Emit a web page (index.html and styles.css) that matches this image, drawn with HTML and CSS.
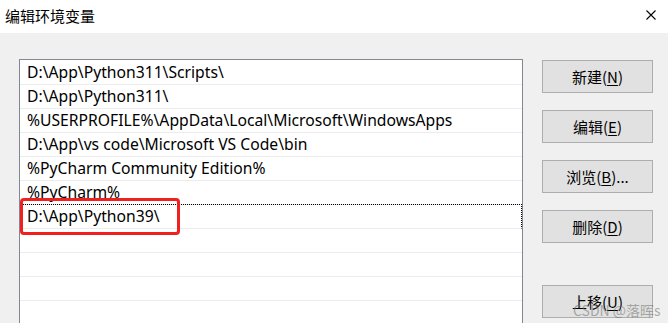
FILE: index.html
```html
<!DOCTYPE html>
<html lang="zh-CN">
<head>
    <meta charset="UTF-8">
    <title>编辑环境变量</title>
    <link rel="stylesheet" href="styles.css">
</head>
<body>

    <div class="titlebar">
        <span class="title">编辑环境变量</span>
        <svg class="close" width="10" height="10" viewBox="0 0 10 10">
            <path d="M0.5 0.5 L9.5 9.5 M9.5 0.5 L0.5 9.5" stroke="#000" stroke-width="1.1" fill="none"/>
        </svg>
    </div>

    <div class="main">
        <div class="path-list">
            <div class="row">D:\App\Python311\Scripts\</div>
            <div class="row">D:\App\Python311\</div>
            <div class="row">%USERPROFILE%\AppData\Local\Microsoft\WindowsApps</div>
            <div class="row">D:\App\vs code\Microsoft VS Code\bin</div>
            <div class="row">%PyCharm Community Edition%</div>
            <div class="row">%PyCharm%</div>
            <div class="row focus">D:\App\Python39\</div>
            <div class="row"></div>
            <div class="row"></div>
            <div class="row"></div>
            <div class="row"></div>
        </div>

        <div class="buttons">
            <button class="btn">新建(<u>N</u>)</button>
            <button class="btn">编辑(<u>E</u>)</button>
            <button class="btn">浏览(<u>B</u>)...</button>
            <button class="btn">删除(<u>D</u>)</button>
            <button class="btn btn-gap">上移(<u>U</u>)</button>
        </div>
    </div>

    <div class="highlight"></div>
    <div class="watermark">CSDN @落晖s</div>

</body>
</html>
```

FILE: styles.css
```css
body {
    margin: 0;
    padding: 0;
    width: 668px;
    height: 323px;
    overflow: hidden;
    background-color: #f0f0f0;
    font-family: "Noto Sans", "Noto Sans CJK SC", sans-serif;
    color: #000;
    position: relative;
}
.titlebar {
    height: 33px;
    background-color: #fff;
    display: flex;
    align-items: center;
    justify-content: space-between;
    padding: 0 12px 0 5px;
}
.title {
    font-family: "Noto Sans CJK SC", sans-serif;
    font-size: 15px;
    margin-top: -2px;
}
.close {
    margin-top: -4px;
}
.main {
    display: flex;
    padding: 26px 0 0 19px;
    gap: 19px;
}
.path-list {
    width: 502px;
    height: 263px;
    overflow: hidden;
    padding-top: 1px;
    border: 1px solid #828790;
    border-bottom: none;
    background-color: #fff;
}
.row {
    height: 24px;
    box-sizing: border-box;
    border-bottom: 1px solid #ececec;
    padding-left: 7px;
    font-size: 15.7px;
    line-height: 23px;
    white-space: nowrap;
}
.row.focus {
    margin-top: -1px;
    height: 25px;
    border-top: 1px dotted #000;
    border-left: 1px dotted #000;
    border-right: 1px dotted #000;
    padding-left: 6px;
}
.buttons {
    display: flex;
    flex-direction: column;
    gap: 17px;
    padding-top: 1px;
}
.btn {
    width: 111px;
    height: 33px;
    padding: 0;
    background-color: #e1e1e1;
    border: 1px solid #adadad;
    border-radius: 0;
    font-family: "Noto Sans CJK SC", sans-serif;
    font-size: 15px;
    color: #000;
}
.btn u {
    text-decoration-thickness: 1px;
    text-underline-offset: 2px;
}
.btn-gap {
    margin-top: 25px;
}
.highlight {
    position: absolute;
    left: 20px;
    top: 198px;
    width: 154px;
    height: 31px;
    border: 3px solid #f02020;
    border-radius: 4px;
}
.watermark {
    position: absolute;
    left: 573px;
    top: 300px;
    font-family: "Noto Sans CJK SC", sans-serif;
    font-size: 14px;
    color: rgba(110, 110, 110, 0.55);
}
```
